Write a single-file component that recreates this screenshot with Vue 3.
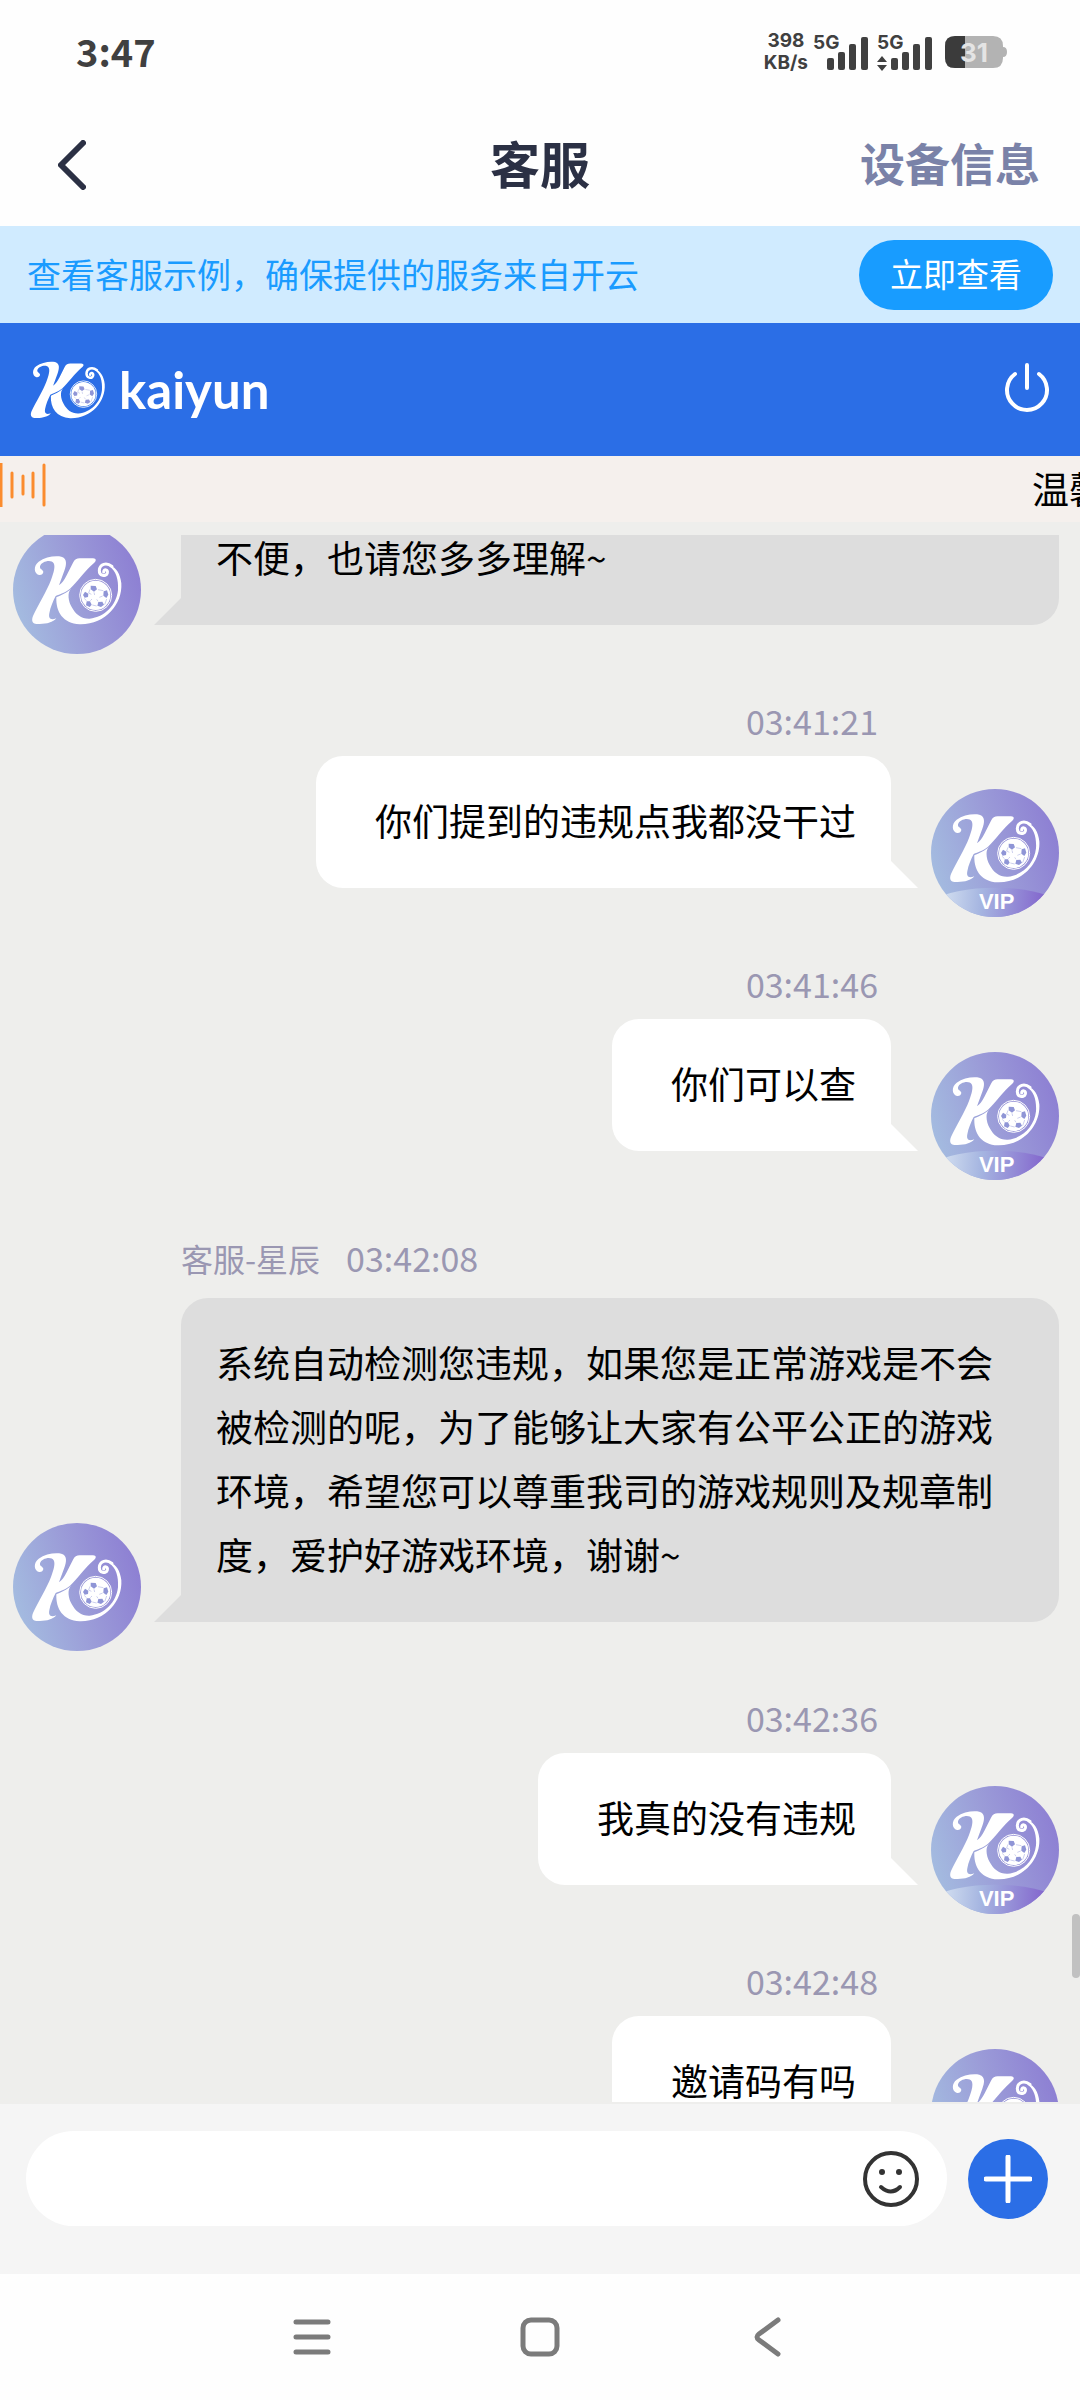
<template>
  <div class="app">
    <!-- shared logo mark and avatar colours -->
    <svg class="sprite" width="0" height="0" aria-hidden="true">
      <defs>
        <linearGradient id="avatar-fill" x1="0" y1="0.65" x2="1" y2="0.35">
          <stop offset="0" stop-color="#a4bce0" />
          <stop offset="0.5" stop-color="#9b9cd8" />
          <stop offset="1" stop-color="#8d7fd3" />
        </linearGradient>
        <linearGradient id="vip-fill" gradientUnits="userSpaceOnUse" x1="50" y1="330" x2="330" y2="350">
          <stop offset="0" stop-color="#ccd9ee" />
          <stop offset="0.35" stop-color="#a6b6e1" />
          <stop offset="1" stop-color="#856ace" />
        </linearGradient>
        <symbol id="logo-mark" viewBox="72 88 272 210">
          <path
            fill="#fff"
            d="M94 147C78 142 77 119 93 107C112 93 142 88 161 92C179 97 177 115 170 134L154 178C163 172 169 163 177 148L196 110C201 100 207 97 216 97L256 97C267 98 266 105 259 111C232 134 208 168 187 188C171 201 157 204 144 210C136 226 128 244 125 262C122 277 128 284 146 277C136 289 118 294 96 294L87 294C73 293 71 283 76 270C91 238 119 192 130 162C139 138 143 121 138 112C131 99 101 106 97 121C95 131 106 130 107 138C106 144 101 148 94 147Z"
          />
          <path
            fill="#fff"
            d="M190 188C178 200 182 226 192 243C204 266 222 279 246 278C291 274 326 238 331 193C333 160 325 134 304 121C322 118 338 142 341 172C345 235 292 297 216 295C166 292 144 258 146 214C160 207 178 201 190 188Z"
          />
          <path
            fill="none"
            stroke="#fff"
            stroke-width="9"
            stroke-linecap="round"
            d="M288 138C288 128 302 130 299 141C295 154 274 150 275 133C276 114 296 108 313 121"
          />
          <circle cx="264" cy="208" r="48" fill="none" stroke="#fff" stroke-width="3" />
          <circle cx="264" cy="208" r="44" fill="#fff" />
          <g class="ball-patch">
            <path d="M249 179L264 180L268 190L259 197L249 190Z" />
            <path d="M288 196L298 193L302 206L296 216L287 209Z" />
            <path d="M272 228L284 227L289 236L280 243L269 239Z" />
            <path d="M237 226L247 226L252 236L246 243L235 238Z" />
            <path d="M232 197L242 203L241 213L231 215L226 207Z" />
          </g>
          <g class="ball-seam">
            <path d="M259 199L261 207M285 210L275 214M271 226L267 220M248 224L253 219M243 201L251 205M271 191L287 194M247 190L243 201M297 219L291 236M267 240L254 237M230 217L236 224" />
          </g>
        </symbol>
      </defs>
    </svg>

    <div class="status-bar">
      <span class="clock">3:47</span>
      <div class="status-icons">
        <span class="net-speed"><span>398</span><span>KB/s</span></span>
        <svg v-for="sim in 2" :key="sim" class="signal" width="59" height="54" viewBox="0 -9 59 54">
          <text x="0" y="15">5G</text>
          <path v-if="sim === 2" d="M5 22L10 28H0ZM5 37L10 31H0Z" />
          <rect x="14" y="24" width="7" height="12" rx="2" />
          <rect x="25" y="18" width="7" height="18" rx="2" />
          <rect x="36" y="10" width="7" height="26" rx="2" />
          <rect x="48" y="3" width="7" height="33" rx="2" />
        </svg>
        <svg class="battery" width="62" height="48" viewBox="0 -8 62 48">
          <path d="M10 0H48Q58 0 58 10V11Q62 11 62 16Q62 21 58 21V22Q58 32 48 32H10Q0 32 0 22V10Q0 0 10 0Z" fill="#b3b3b3" />
          <path d="M10 0H20V32H10Q0 32 0 22V10Q0 0 10 0Z" fill="#3b3b3b" />
          <text x="15" y="26">31</text>
        </svg>
      </div>
    </div>

    <header class="title-bar">
      <button class="back-button" type="button" aria-label="返回">
        <svg width="28" height="50" viewBox="0 0 28 50">
          <path d="M25 3L3 25L25 47" />
        </svg>
      </button>
      <h1 class="title">客服</h1>
      <a class="device-link" href="#">设备信息</a>
    </header>

    <div class="tip-bar">
      <span class="tip-text">查看客服示例，确保提供的服务来自开云</span>
      <button class="tip-button" type="button">立即查看</button>
    </div>

    <div class="brand-bar">
      <div class="brand">
        <svg class="brand-mark" width="76" height="58"><use href="#logo-mark" /></svg>
        <span class="brand-name">kaiyun</span>
      </div>
      <button class="power-button" type="button" aria-label="退出">
        <svg width="46" height="50" viewBox="0 0 46 50">
          <path d="M23 2V25M11 11A20 20 0 1 0 35 11" />
        </svg>
      </button>
    </div>

    <div class="notice-bar">
      <svg class="notice-icon" width="48" height="44" viewBox="0 0 48 44">
        <path d="M1 0V44" stroke="#ff7a00" stroke-width="4" />
        <path d="M12 10V34M23 13V31M33 10V34M44 2V42" />
      </svg>
      <span class="notice-text">温馨</span>
    </div>

    <main class="chat">
      <div class="chat-view">
        <div class="message-list">
          <div
            v-for="message in messages"
            :key="message.text"
            class="message"
            :class="message.from"
          >
            <div v-if="message.time" class="message-meta">
              <span v-if="message.name">{{ message.name }}</span>
              <time>{{ message.time }}</time>
            </div>
            <div class="message-row">
              <svg class="avatar" width="128" height="128" viewBox="0 0 384 384">
                <rect width="384" height="384" fill="url(#avatar-fill)" />
                <g v-if="message.from === 'user'">
                  <ellipse cx="192" cy="440" rx="290" ry="144" fill="url(#vip-fill)" />
                  <text class="vip" x="197" y="361" text-anchor="middle">VIP</text>
                </g>
                <use href="#logo-mark" x="56" :y="message.from === 'user' ? 73 : 88" width="272" height="210" />
              </svg>
              <p class="bubble">{{ message.text }}</p>
            </div>
          </div>
        </div>
      </div>
      <div class="scroll-thumb" :style="{ top: scrollTop + '%' }"></div>
    </main>

    <form class="composer" @submit.prevent>
      <div class="composer-field">
        <input v-model="draft" class="composer-input" type="text" aria-label="消息" />
        <button class="emoji-button" type="button" aria-label="表情">
          <svg width="56" height="56" viewBox="0 0 56 56">
            <circle cx="28" cy="28" r="26" fill="none" stroke="#333" stroke-width="4" />
            <circle cx="19" cy="21" r="3" fill="#333" />
            <circle cx="36" cy="21" r="3" fill="#333" />
            <path d="M18 36Q28 45 37 36" fill="none" stroke="#333" stroke-width="4" stroke-linecap="round" />
          </svg>
        </button>
      </div>
      <button class="plus-button" type="button" aria-label="更多">
        <svg width="48" height="48" viewBox="0 0 48 48">
          <path d="M24 2V46M2 24H46" />
        </svg>
      </button>
    </form>

    <nav class="system-nav">
      <button type="button" aria-label="最近任务">
        <svg width="40" height="40" viewBox="0 0 40 40"><path d="M4 5H36M4 20H36M4 35H36" /></svg>
      </button>
      <button type="button" aria-label="主屏幕">
        <svg width="40" height="40" viewBox="0 0 40 40"><rect x="3" y="3" width="34" height="34" rx="8" /></svg>
      </button>
      <button type="button" aria-label="后退">
        <svg width="40" height="40" viewBox="0 0 40 40"><path d="M30 3L11 17Q7 20 11 23L30 37" /></svg>
      </button>
    </nav>
  </div>
</template>

<script setup>
import { ref } from 'vue'

const draft = ref('')

// thumb position as a share of the chat height
const scrollTop = ref(88)

const messages = ref([
  { from: 'agent', text: '不便，也请您多多理解~' },
  { from: 'user', time: '03:41:21', text: '你们提到的违规点我都没干过' },
  { from: 'user', time: '03:41:46', text: '你们可以查' },
  {
    from: 'agent',
    name: '客服-星辰',
    time: '03:42:08',
    text: '系统自动检测您违规，如果您是正常游戏是不会被检测的呢，为了能够让大家有公平公正的游戏环境，希望您可以尊重我司的游戏规则及规章制度，爱护好游戏环境，谢谢~'
  },
  { from: 'user', time: '03:42:36', text: '我真的没有违规' },
  { from: 'user', time: '03:42:48', text: '邀请码有吗' }
])
</script>

<style>
body {
  margin: 0;
}
</style>

<style scoped>
.app {
  display: flex;
  flex-direction: column;
  height: 100vh;
  overflow: hidden;
  background: #fefefe;
  font-family: "Noto Sans CJK SC", "Noto Sans", sans-serif;
}

button {
  display: flex;
  align-items: center;
  justify-content: center;
  padding: 0;
  border: none;
  background: none;
  font-family: inherit;
  cursor: pointer;
}

.sprite {
  position: absolute;
}

.ball-patch {
  fill: #8f95d6;
}

.ball-seam {
  fill: none;
  stroke: #b3b8e6;
  stroke-width: 2;
}

.status-bar {
  display: flex;
  align-items: center;
  justify-content: space-between;
  height: 104px;
  padding: 0 73px 0 76px;
  color: #404040;
}

.clock {
  padding-bottom: 3px;
  font-size: 38px;
  font-weight: 700;
}

.status-icons {
  display: flex;
  align-items: center;
  gap: 5px;
}

.net-speed {
  display: flex;
  flex-direction: column;
  align-items: center;
  font-family: Inter, sans-serif;
  font-size: 19px;
  font-weight: 700;
  line-height: 22px;
}

.signal {
  fill: #404040;
  font-family: Inter, sans-serif;
  font-size: 19px;
  font-weight: 700;
}

.battery {
  margin-left: 4px;
}

.battery text {
  fill: #e4e4e4;
  font-family: Inter, sans-serif;
  font-size: 26px;
  font-weight: 700;
}

.title-bar {
  display: grid;
  grid-template-columns: 1fr auto 1fr;
  align-items: center;
  height: 122px;
  padding: 0 40px;
}

.back-button {
  justify-self: start;
  margin-left: 18px;
}

.back-button path {
  fill: none;
  stroke: #2b3044;
  stroke-width: 6;
  stroke-linecap: round;
  stroke-linejoin: round;
}

.title {
  margin: 0;
  padding-bottom: 6px;
  color: #2b3044;
  font-size: 50px;
  font-weight: 700;
}

.device-link {
  justify-self: end;
  padding-bottom: 6px;
  color: #7a82a8;
  font-size: 45px;
  font-weight: 700;
  text-decoration: none;
}

.tip-bar {
  display: flex;
  align-items: center;
  justify-content: space-between;
  height: 97px;
  padding: 0 27px;
  background: #d0ebff;
  color: #1a9bff;
  font-size: 34px;
}

.tip-text {
  padding-bottom: 3px;
}

.tip-button {
  height: 70px;
  padding: 0 31px 3px;
  border-radius: 35px;
  background: #189cff;
  color: #fff;
  font-size: 33px;
}

.brand-bar {
  display: flex;
  align-items: center;
  justify-content: space-between;
  height: 133px;
  padding: 0 30px;
  background: #2b6ee6;
}

.brand {
  display: flex;
  align-items: center;
  gap: 13px;
}

.brand-name {
  color: #fff;
  font-family: Lato, sans-serif;
  font-size: 51px;
  font-weight: 700;
  line-height: 58px;
}

.power-button {
  padding-bottom: 3px;
}

.power-button path {
  fill: none;
  stroke: #fff;
  stroke-width: 4;
  stroke-linecap: round;
}

.notice-bar {
  display: flex;
  align-items: center;
  justify-content: space-between;
  height: 66px;
  overflow: hidden;
  background: #f5f0ed;
}

.notice-icon {
  flex-shrink: 0;
  margin-bottom: 8px;
}

.notice-icon path {
  stroke: #fb8c2e;
  stroke-width: 3;
  stroke-linecap: round;
}

.notice-text {
  width: 48px;
  padding-bottom: 3px;
  color: #000;
  font-size: 37px;
  white-space: nowrap;
}

.chat {
  position: relative;
  display: flex;
  flex: 1;
  flex-direction: column;
  min-height: 0;
  padding: 13px 0 2px;
  background: #eeeeec;
}

.chat-view {
  flex: 1;
  min-height: 0;
  overflow: hidden;
}

/* the first message is already half scrolled out */
.message-list {
  display: flex;
  flex-direction: column;
  margin-top: -42px;
}

.message-meta {
  display: flex;
  gap: 26px;
  color: #9a97b2;
  line-height: 40px;
}

.message-meta span {
  font-size: 32px;
}

.message-meta time {
  font-size: 34px;
}

.message.user .message-meta {
  justify-content: flex-end;
  padding: 76px 202px 15px 0;
}

.message.agent .message-meta {
  padding: 87px 0 20px 181px;
}

.message-row {
  display: flex;
  align-items: flex-end;
  gap: 40px;
}

.message.user .message-row {
  flex-direction: row-reverse;
  padding: 0 21px 0 14px;
}

.message.agent .message-row {
  padding: 0 21px 0 13px;
}

.avatar {
  flex-shrink: 0;
  margin-bottom: -29px;
  border-radius: 50%;
}

.vip {
  fill: #fff;
  font-family: "Liberation Sans", sans-serif;
  font-size: 66px;
  font-weight: 700;
}

.bubble {
  position: relative;
  margin: 0;
  padding: 32px 35px 36px;
  border-radius: 27px;
  color: #000;
  font-size: 37px;
  line-height: 64px;
}

.bubble::after {
  content: "";
  position: absolute;
  bottom: 0;
  width: 54px;
  height: 27px;
}

.message.user .bubble {
  padding-left: 59px;
  border-bottom-right-radius: 0;
  background: #fff;
}

.message.user .bubble::after {
  right: -27px;
  background: #fff;
  clip-path: polygon(0 0, 50% 0, 100% 100%, 0 100%);
}

.message.agent .bubble {
  flex: 1;
  border-bottom-left-radius: 0;
  background: #ddd;
}

.message.agent .bubble::after {
  left: -27px;
  background: #ddd;
  clip-path: polygon(50% 0, 100% 0, 100% 100%, 0 100%);
}

.scroll-thumb {
  position: absolute;
  right: 0;
  width: 8px;
  height: 64px;
  border-radius: 4px;
  background: #c1c1c1;
}

.composer {
  display: flex;
  align-items: center;
  gap: 21px;
  padding: 27px 32px 48px 26px;
  background: #f5f5f5;
}

.composer-field {
  display: flex;
  flex: 1;
  align-items: center;
  height: 95px;
  padding: 0 28px;
  border-radius: 48px;
  background: #fff;
}

.composer-input {
  flex: 1;
  min-width: 0;
  border: none;
  outline: none;
  background: none;
  font-family: inherit;
  font-size: 37px;
}

.plus-button {
  width: 80px;
  height: 80px;
  border-radius: 50%;
  background: #2b6ee6;
}

.plus-button path {
  stroke: #fff;
  stroke-width: 5;
  stroke-linecap: round;
}

.system-nav {
  display: flex;
  align-items: center;
  justify-content: center;
  gap: 188px;
  height: 126px;
}

.system-nav svg {
  fill: none;
  stroke: #7b7b7b;
  stroke-width: 5;
  stroke-linecap: round;
}
</style>
